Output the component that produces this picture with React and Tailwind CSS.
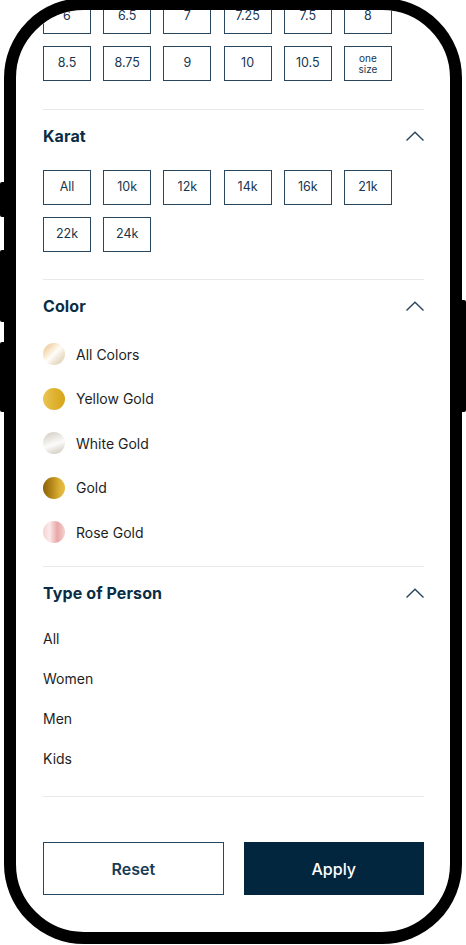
import React from 'react';

const sizes = ['6', '6.5', '7', '7.25', '7.5', '8', '8.5', '8.75', '9', '10', '10.5', 'one size'];
const karats = ['All', '10k', '12k', '14k', '16k', '21k', '22k', '24k'];

const colors = [
  { name: 'All Colors', bg: 'bg-[linear-gradient(135deg,#eab987_0%,#f7e3c4_30%,#fffdf8_50%,#efe6d6_68%,#d9c7a4_100%)]' },
  { name: 'Yellow Gold', bg: 'bg-[linear-gradient(90deg,#ebc655_0%,#dfb231_50%,#d6a619_100%)]' },
  { name: 'White Gold', bg: 'bg-[linear-gradient(160deg,#cfc9bd_0%,#f4f3f0_45%,#fbfbfa_55%,#c9c3b6_100%)]' },
  { name: 'Gold', bg: 'bg-[linear-gradient(90deg,#8a6209_0%,#b5881a_40%,#dcb035_75%,#e6be45_100%)]' },
  { name: 'Rose Gold', bg: 'bg-[linear-gradient(90deg,#f4d2d2_0%,#fbe9e9_30%,#e8a7a7_65%,#f5d0d0_100%)]' },
];

const people = ['All', 'Women', 'Men', 'Kids'];

function Chevron() {
  return (
    <svg width="18" height="10" viewBox="0 0 18 10" fill="none">
      <polyline points="0.5,9.5 9,1.2 17.5,9.5" stroke="#284560" strokeWidth="1.4" />
    </svg>
  );
}

function SectionHeader({ title }) {
  return (
    <div className="h-6 flex items-center justify-between">
      <h3 className="text-[16px] font-bold text-[#0a2c45] tracking-[0.1px]">{title}</h3>
      <Chevron />
    </div>
  );
}

function OptionBox({ label }) {
  const twoLine = label.includes(' ');
  return (
    <button className="h-[35px] w-[48px] border border-[#2a4760] flex items-center justify-center text-[#183650]">
      {twoLine ? (
        <span className="text-[10px] leading-[11px] flex flex-col">
          {label.split(' ').map((w) => (
            <span key={w}>{w}</span>
          ))}
        </span>
      ) : (
        <span className="text-[12.5px]">{label}</span>
      )}
    </button>
  );
}

function Divider({ className }) {
  return <div className={`border-t border-[#e9e9e9] ${className}`} />;
}

export default function App() {
  return (
    <div className="relative w-[466px] h-[945px] bg-white overflow-hidden font-['Inter',sans-serif]">
      {/* side buttons */}
      <div className="absolute left-0 top-[182px] w-[6px] h-[35px] bg-black rounded-l-[2px]" />
      <div className="absolute left-0 top-[250px] w-[6px] h-[72px] bg-black rounded-l-[2px]" />
      <div className="absolute left-0 top-[342px] w-[6px] h-[70px] bg-black rounded-l-[2px]" />
      <div className="absolute right-0 top-[300px] w-[6px] h-[112px] bg-black rounded-r-[2px]" />

      {/* device frame */}
      <div className="relative ml-[4px] -mt-[2px] w-[458px] h-[946px] border-[12px] border-black rounded-[80px] bg-white overflow-hidden">
        <div className="-mt-[11px] pl-[27px] w-[408px]">
          {/* Size */}
          <div className="grid grid-cols-[repeat(6,48px)] gap-x-[12.2px] gap-y-[12px]">
            {sizes.map((s) => (
              <OptionBox key={s} label={s} />
            ))}
          </div>

          <Divider className="mt-[28px]" />

          {/* Karat */}
          <div className="pt-[14px]">
            <SectionHeader title="Karat" />
            <div className="mt-[22px] grid grid-cols-[repeat(6,48px)] gap-x-[12.2px] gap-y-[12px]">
              {karats.map((k) => (
                <OptionBox key={k} label={k} />
              ))}
            </div>
          </div>

          <Divider className="mt-[27px]" />

          {/* Color */}
          <div className="pt-[14px]">
            <SectionHeader title="Color" />
            <ul className="mt-[25px] flex flex-col gap-[22.5px]">
              {colors.map((c) => (
                <li key={c.name} className="h-[22px] flex items-center">
                  <span className={`w-[22px] h-[22px] rounded-full ${c.bg}`} />
                  <span className="ml-[11px] text-[14px] text-[#1e1e1e]">{c.name}</span>
                </li>
              ))}
            </ul>
          </div>

          <Divider className="mt-[23px]" />

          {/* Type of Person */}
          <div className="pt-[14px]">
            <SectionHeader title="Type of Person" />
            <ul className="mt-[23px] flex flex-col gap-5">
              {people.map((p) => (
                <li key={p} className="h-5 flex items-center text-[14px] text-[#1e1e1e]">
                  {p}
                </li>
              ))}
            </ul>
          </div>

          <Divider className="mt-[28px]" />

          {/* Actions */}
          <div className="mt-[45px] grid grid-cols-2 gap-5">
            <button className="h-[53px] border-[1.5px] border-[#284760] text-[#1b3a54] text-[16px] font-semibold">
              Reset
            </button>
            <button className="h-[53px] bg-[#03263f] text-white text-[16px] font-medium">
              Apply
            </button>
          </div>
        </div>
      </div>
    </div>
  );
}
